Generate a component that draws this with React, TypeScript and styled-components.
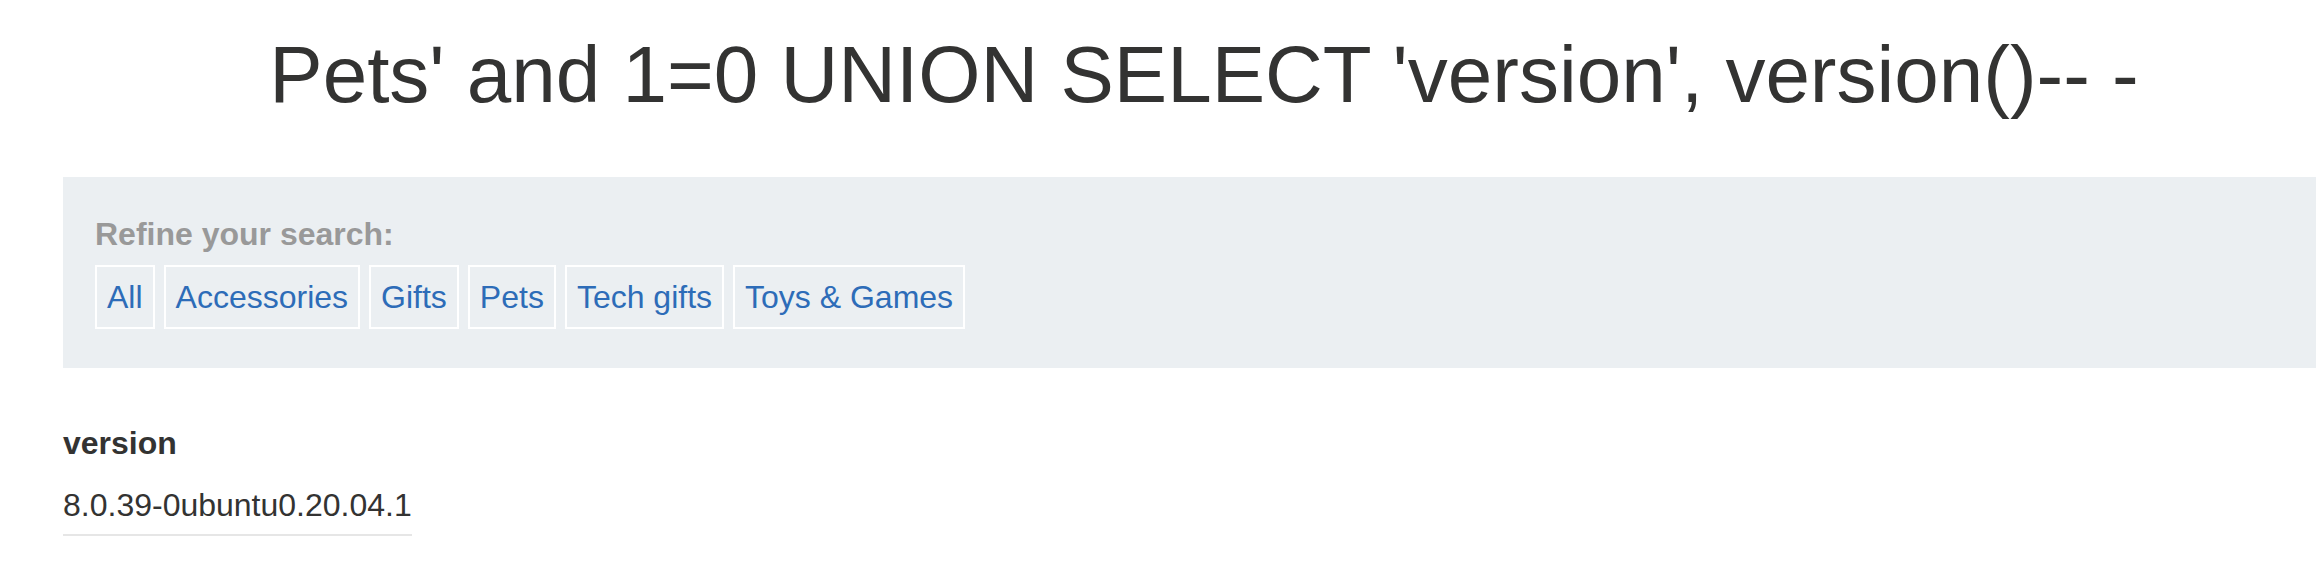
import React from 'react';
import styled, { createGlobalStyle } from 'styled-components';

const GlobalStyle = createGlobalStyle`
  html, body {
    margin: 0;
    padding: 0;
    background: #fff;
    overflow: hidden;
  }

  body {
    font-family: 'Liberation Sans', Arial, sans-serif;
    color: #333332;
  }
`;

const Page = styled.div`
  width: 2282px;
  margin-left: 63px;
`;

const Title = styled.h1`
  margin: 29px 0 56px;
  font-size: 80px;
  font-weight: normal;
  line-height: normal;
  text-align: center;
  color: #333332;
`;

const Filters = styled.section`
  background-color: #ebeff2;
  padding: 39px 32px;
`;

const FiltersLabel = styled.div`
  margin-bottom: 12px;
  font-size: 32px;
  font-weight: bold;
  line-height: normal;
  color: #999;
`;

const FilterList = styled.div`
  display: flex;
  gap: 9px;
`;

const FilterLink = styled.a`
  display: block;
  padding: 11px 10px;
  border: 2px solid #fff;
  font-size: 32px;
  line-height: 38px;
  color: #2d6cb8;
  text-decoration: none;
`;

const Results = styled.table`
  margin-top: 57px;
  border-collapse: separate;
  border-spacing: 0;
  font-size: 32px;
`;

const HeadCell = styled.th`
  padding: 0 0 12px;
  text-align: left;
  font-weight: bold;
  line-height: normal;
`;

const Cell = styled.td`
  padding: 13px 0 10px;
  line-height: normal;
  border-bottom: 2px solid #e6e6e6;
`;

const categories = ['All', 'Accessories', 'Gifts', 'Pets', 'Tech gifts', 'Toys & Games'];

const App: React.FC = () => {
  return (
    <>
      <GlobalStyle />
      <Page>
        <Title>Pets' and 1=0 UNION SELECT 'version', version()-- -</Title>
        <Filters>
          <FiltersLabel>Refine your search:</FiltersLabel>
          <FilterList>
            {categories.map(name => (
              <FilterLink key={name} href="#">
                {name}
              </FilterLink>
            ))}
          </FilterList>
        </Filters>
        <Results>
          <thead>
            <tr>
              <HeadCell>version</HeadCell>
            </tr>
          </thead>
          <tbody>
            <tr>
              <Cell>8.0.39-0ubuntu0.20.04.1</Cell>
            </tr>
          </tbody>
        </Results>
      </Page>
    </>
  );
};

export default App;
